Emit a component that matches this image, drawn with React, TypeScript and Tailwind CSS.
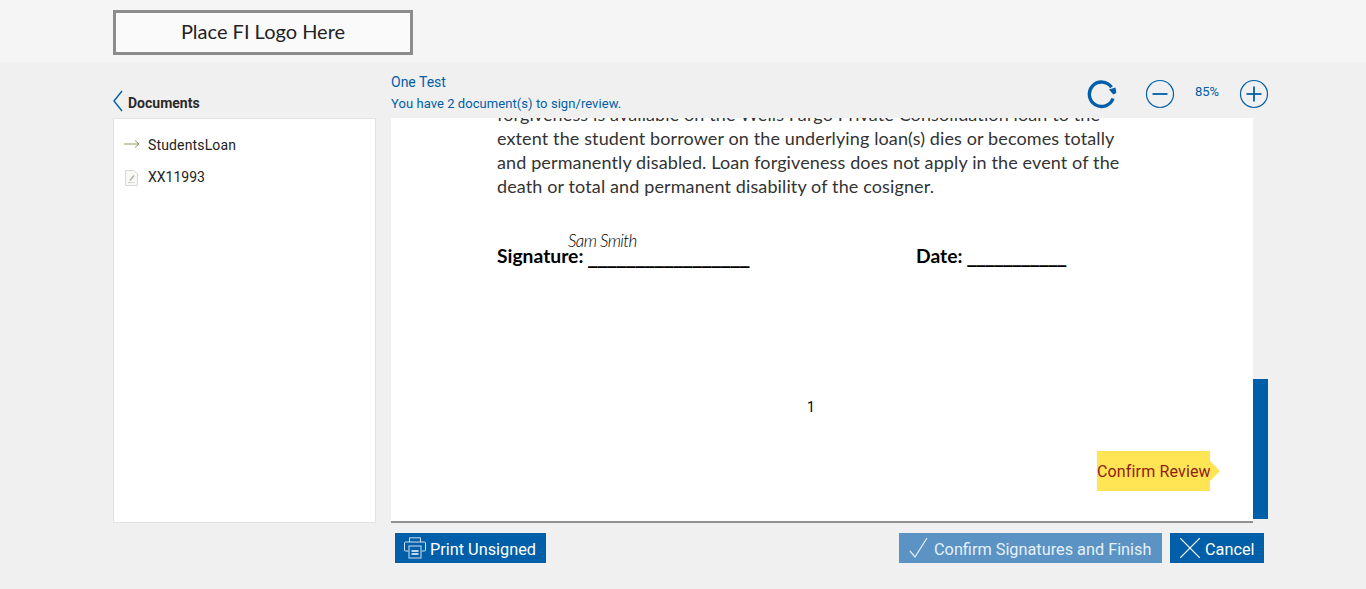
const bodyLines = [
  "forgiveness is available on the Wells Fargo Private Consolidation loan to the",
  "extent the student borrower on the underlying loan(s) dies or becomes totally",
  "and permanently disabled. Loan forgiveness does not apply in the event of the",
  "death or total and permanent disability of the cosigner.",
];

function RefreshIcon() {
  return (
    <svg width="32" height="32" viewBox="0 0 32 32" fill="none">
      <path d="M24.5 9.2A12.2 12.2 0 1 0 26 20.5" stroke="#005fa8" strokeWidth="3.4" />
      <path d="M22 11.5l6.5-2 .8 5.5-3 1.6z" fill="#005fa8" />
    </svg>
  );
}

function ZoomButton({ plus }: { plus?: boolean }) {
  return (
    <svg width="30" height="30" viewBox="0 0 30 30" fill="none" stroke="#005fa8">
      <circle cx="15" cy="15" r="13.5" strokeWidth="1.2" />
      <path d="M7.5 15h15" strokeWidth="1.8" />
      {plus && <path d="M15 7.5v15" strokeWidth="1.8" />}
    </svg>
  );
}

function PrinterIcon() {
  return (
    <svg width="22" height="22" viewBox="0 0 22 22" fill="none" stroke="#cfe0ef" strokeWidth="1">
      <path d="M5.5 5V.8h11V5" />
      <path d="M4.5 14H1.5a1 1 0 0 1-1-1V6a1 1 0 0 1 1-1h19a1 1 0 0 1 1 1v7a1 1 0 0 1-1 1h-3" />
      <rect x="5" y="9" width="12" height="12" fill="#005fa8" />
      <path d="M7.5 14h7M7.5 17h7" strokeWidth="1.6" stroke="#fff" />
    </svg>
  );
}

function DocIcon() {
  return (
    <svg width="13" height="16" viewBox="0 0 13 16" fill="none">
      <path d="M.5.5h8.5l3.5 3.5v11.500H.5z" fill="#f8f8f4" stroke="#d4d9dc" />
      <path d="M3 12.500h7" stroke="#d8d8d0" />
      <path d="M5 10.500l4-5" stroke="#aab0a8" strokeWidth="1.4" />
    </svg>
  );
}

export default function App() {
  return (
    <div className="flex h-[589px] flex-col overflow-hidden bg-[#f0f0f0] font-['Roboto',sans-serif]">
      <header className="h-[62px] bg-[#f5f5f5] pl-[113px] pt-[10px]">
        <div className="flex h-[45px] w-[300px] items-center justify-center border-[3px] border-[#8c8c8c] bg-[#fafafa] pb-[3px] font-['Lato',sans-serif] text-[20px] text-[#222]">
          Place FI Logo Here
        </div>
      </header>

      <main className="flex gap-[15px] pl-[113px]">
        <aside className="w-[263px]">
          <div className="flex h-[56px] items-end pb-[6px]">
            <svg width="10" height="22" viewBox="0 0 10 22" fill="none" stroke="#005fa8" strokeWidth="1.4">
              <path d="M9 1L1 11l8 10" />
            </svg>
            <span className="ml-[5px] text-[14px] leading-[18px] font-bold text-[#2b2b2b]">Documents</span>
          </div>
          <div className="h-[405px] border border-[#e2e2e2] bg-white pl-[10px] pt-[16px] text-[14px] text-[#222]">
            <div className="flex h-[21px] items-center gap-[8px]">
              <svg className="mb-[3px]" width="16" height="10" viewBox="0 0 16 10" fill="none" stroke="#8a9a5b">
                <path d="M0 5h15M11 1.500L15 5l-4 3.500" />
              </svg>
              <span className="tracking-[0.15px]">StudentsLoan</span>
            </div>
            <div className="mt-[11px] flex h-[21px] items-center gap-[10px] pl-[1px]">
              <DocIcon />
              <span>XX11993</span>
            </div>
          </div>
        </aside>

        <section className="w-[877px]">
          <div className="flex h-[56px]">
            <div className="flex-1 pt-[12px] text-[#005fa8]">
              <div className="text-[14px] leading-[16px]">One Test</div>
              <div className="mt-[6px] text-[13px] leading-[16px] tracking-[0.06px]">You have 2 document(s) to sign/review.</div>
            </div>
            <div className="mr-[-1px] flex items-center pt-[8px] text-[13px] text-[#005fa8]">
              <RefreshIcon />
              <div className="ml-[26px] flex items-center">
                <ZoomButton />
                <span className="w-[64px] pb-[4px] text-center">85%</span>
                <ZoomButton plus />
              </div>
            </div>
          </div>

          <div className="relative h-[405px] w-[877px]">
            <div className="h-[405px] w-[862px] overflow-hidden border-b-2 border-[#919191] bg-white font-['Lato',sans-serif] text-[#333]">
              <div className="mt-[-16px] pl-[106px] text-[18px] leading-[24px] tracking-[0.12px]">
                {bodyLines.map((line) => (
                  <p key={line}>{line}</p>
                ))}
              </div>
              <div className="relative mt-[46px] flex pl-[106px] text-[19.300px] font-bold leading-[24px] text-black">
                <span className="w-[419px]">
                  Signature: <span className="font-['DejaVu_Sans',sans-serif] text-[19px]">_________________</span>
                </span>
                <span>
                  Date: <span className="font-['DejaVu_Sans',sans-serif] text-[18px]">___________</span>
                </span>
                <span className="absolute left-[177px] top-[-15px] font-['Lato',sans-serif] text-[17px] font-light italic tracking-[-0.6px]">
                  Sam Smith
                </span>
              </div>
              <div className="mt-[128px] pr-[22px] text-center font-['Roboto',sans-serif] text-[14px] leading-[20px] text-black">1</div>
            </div>

            <div className="absolute right-0 top-[261px] h-[140px] w-[15px] bg-[#005fa8]" />

            <div className="absolute left-[705px] top-[332px] flex items-center">
              <div className="flex h-[42px] w-[115px] items-center border border-[#fafafa] bg-[#ffe553] pt-[2px] text-[16px] tracking-[0.15px] text-[#8c1d18]">
                <span className="whitespace-nowrap">Confirm Review</span>
              </div>
              <div className="ml-[-1px] h-0 w-0 border-y-[10px] border-l-[10px] border-y-transparent border-l-[#ffe553]" />
            </div>
          </div>

          <div className="flex h-[30px] w-[873px] translate-y-[10px] items-center justify-between pl-[4px] text-[16.300px] text-white">
            <button className="flex h-[30px] w-[151px] items-center gap-[4px] bg-[#005fa8] pl-[9px]">
              <PrinterIcon />
              <span className="mt-[5px]">Print Unsigned</span>
            </button>
            <div className="flex gap-[8px]">
              <button className="flex h-[30px] w-[263px] items-center bg-[#5a93c4] pl-[10px] text-[#e8f0f7]">
                <svg width="20" height="22" viewBox="0 0 20 22" fill="none" stroke="#e8f0f7" strokeWidth="1.2">
                  <path d="M1 14l5 6L18 1" />
                </svg>
                <span className="ml-[5px] mt-[5px]">Confirm Signatures and Finish</span>
              </button>
              <button className="flex h-[30px] w-[94px] items-center bg-[#005fa8] pl-[10px]">
                <svg width="20" height="20" viewBox="0 0 20 20" fill="none" stroke="#fff" strokeWidth="1.200">
                  <path d="M0 0l20 20M20 0L0 20" />
                </svg>
                <span className="ml-[5px] mt-[5px]">Cancel</span>
              </button>
            </div>
          </div>
        </section>
      </main>
    </div>
  );
}
